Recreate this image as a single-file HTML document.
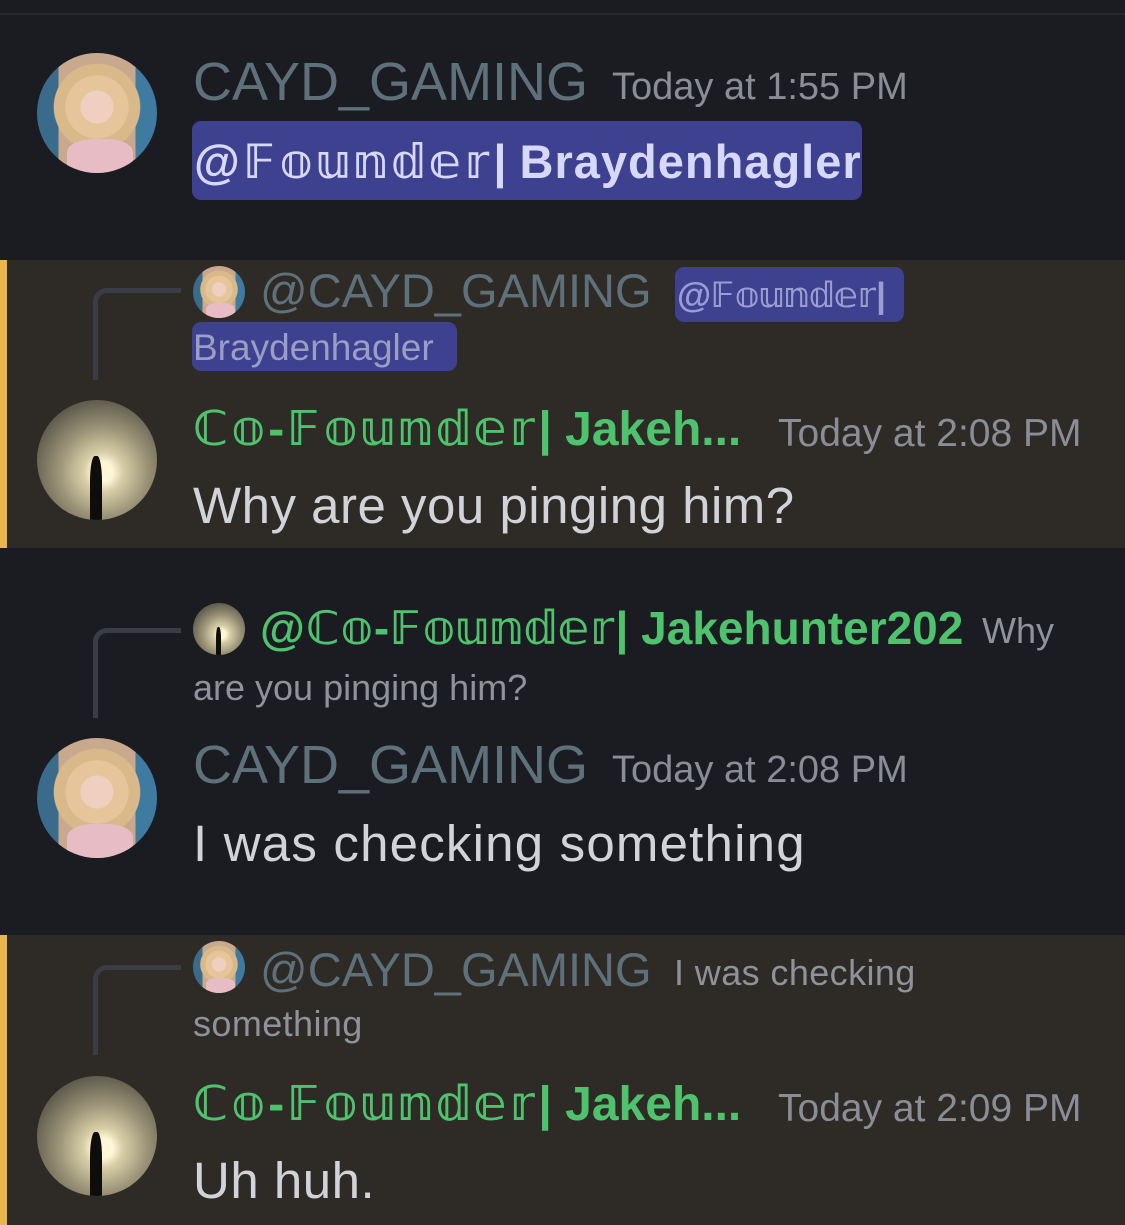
<!DOCTYPE html>
<html><head><meta charset="utf-8"><style>
*{margin:0;padding:0;box-sizing:border-box}
body{width:1125px;height:1225px;background:#1b1c22;position:relative;overflow:hidden;font-family:"Liberation Sans","DejaVu Sans",sans-serif}
.t{position:absolute;white-space:nowrap;line-height:1}
.hl{position:absolute;left:0;width:1125px;background:#2e2a26}
.bar{position:absolute;left:0;top:0;width:7px;height:100%;background:#e8b64a}
.av{position:absolute;border-radius:50%;overflow:hidden}
.girl{background:radial-gradient(circle at 50% 45%,#f1cfc0 0 18%,#e6c59a 19% 35%,#d9b98a 36% 48%,transparent 49%),linear-gradient(90deg,#3b6b8a 0 18%,#c9a98e 18% 82%,#3f7aa0 82%);}
.girl::after{content:"";position:absolute;left:25%;right:20%;bottom:0;height:28%;background:#e8bcc4;border-radius:40% 40% 0 0}
.sold{background:radial-gradient(circle at 55% 60%,#fff6d8 0 10%,#d8cfa8 20%,#9c9478 45%,#5d5a4c 75%,#3c3a33)}
.sold::after{content:"";position:absolute;left:44%;top:47%;width:10%;height:53%;background:#0e0d0b;border-radius:40% 40% 0 0}
.line{position:absolute;border-left:5px solid #3b3d45;border-top:5px solid #3b3d45;border-top-left-radius:14px}
.name{color:#5e7079;font-size:54px}
.time{color:#8a8c96;font-size:38px}
.green{color:#4fc26d;font-size:48px;font-weight:bold}
.ds{letter-spacing:3.5px}
.body{color:#d2d3d8;font-size:51px;letter-spacing:0.5px}
.sub{color:#8f919b;font-size:36px}
.ment{position:absolute;background:#3e4090;border-radius:9px}
</style></head><body>
<div style="position:absolute;left:0;top:13px;width:1125px;height:2px;background:#26272d"></div>

<div class="av girl" style="left:37px;top:53px;width:120px;height:120px"></div>
<div class="t name" style="left:193px;top:55px">CAYD_GAMING</div>
<div class="t time" style="left:612px;top:68px">Today at 1:55 PM</div>
<div class="ment" style="left:192px;top:121px;width:670px;height:79px"></div>
<div class="t" style="left:194px;top:138px;font-size:47px;color:#d6d9fb;font-weight:bold"><span style="letter-spacing:4px">@𝔽𝕠𝕦𝕟𝕕𝕖𝕣</span>| <span style="letter-spacing:1px">Braydenhagler</span></div>

<div class="hl" style="top:260px;height:288px"><div class="bar"></div></div>
<div class="line" style="left:93px;top:288px;width:88px;height:92px"></div>
<div class="av girl" style="left:193px;top:266px;width:52px;height:52px"></div>
<div class="t name" style="left:260px;top:267px;font-size:47px">@CAYD_GAMING</div>
<div class="ment" style="left:675px;top:267px;width:229px;height:55px"></div>
<div class="t" style="left:677px;top:278px;font-size:35px;color:#9a9dd0;font-weight:bold">@𝔽𝕠𝕦𝕟𝕕𝕖𝕣|</div>
<div class="ment" style="left:192px;top:322px;width:265px;height:49px"></div>
<div class="t" style="left:193px;top:329px;font-size:37px;color:#9a9dc4">Braydenhagler</div>
<div class="av sold" style="left:37px;top:400px;width:120px;height:120px"></div>
<div class="t green" style="left:193px;top:406px"><span class="ds">ℂ𝕠-𝔽𝕠𝕦𝕟𝕕𝕖𝕣</span>| Jakeh...</div>
<div class="t time" style="left:778px;top:414px;font-size:39px">Today at 2:08 PM</div>
<div class="t body" style="left:193px;top:480px">Why are you pinging him?</div>

<div class="line" style="left:93px;top:628px;width:88px;height:90px"></div>
<div class="av sold" style="left:193px;top:603px;width:52px;height:52px"></div>
<div class="t green" style="left:260px;top:605px;font-size:46px"><span style="letter-spacing:1.2px">@ℂ𝕠-𝔽𝕠𝕦𝕟𝕕𝕖𝕣</span>| Jakehunter202</div>
<div class="t sub" style="left:982px;top:613px">Why</div>
<div class="t sub" style="left:193px;top:670px">are you pinging him?</div>
<div class="av girl" style="left:37px;top:738px;width:120px;height:120px"></div>
<div class="t name" style="left:193px;top:738px">CAYD_GAMING</div>
<div class="t time" style="left:612px;top:751px">Today at 2:08 PM</div>
<div class="t body" style="left:193px;top:818px;letter-spacing:1.2px">I was checking something</div>

<div class="hl" style="top:935px;height:290px"><div class="bar"></div></div>
<div class="line" style="left:93px;top:965px;width:88px;height:90px"></div>
<div class="av girl" style="left:193px;top:941px;width:52px;height:52px"></div>
<div class="t name" style="left:260px;top:946px;font-size:47px">@CAYD_GAMING</div>
<div class="t sub" style="left:674px;top:955px;letter-spacing:0.4px">I was checking</div>
<div class="t sub" style="left:193px;top:1006px;letter-spacing:0.4px">something</div>
<div class="av sold" style="left:37px;top:1076px;width:120px;height:120px"></div>
<div class="t green" style="left:193px;top:1081px"><span class="ds">ℂ𝕠-𝔽𝕠𝕦𝕟𝕕𝕖𝕣</span>| Jakeh...</div>
<div class="t time" style="left:778px;top:1089px;font-size:39px">Today at 2:09 PM</div>
<div class="t body" style="left:193px;top:1155px">Uh huh.</div>
</body></html>
